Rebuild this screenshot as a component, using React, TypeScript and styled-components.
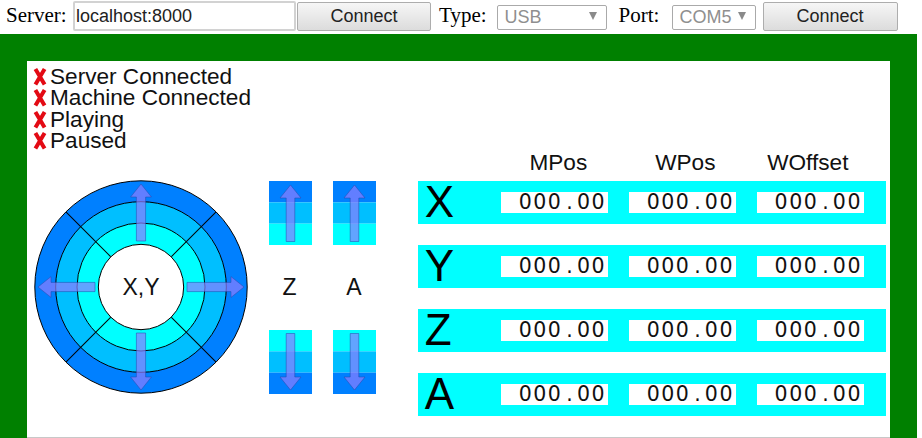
import styled, { createGlobalStyle } from "styled-components";

const GlobalStyle = createGlobalStyle`
  html, body {
    margin: 0;
    padding: 0;
    height: 438px;
    overflow: hidden;
    background: #fff;
  }
`;

const Toolbar = styled.div`
  display: flex;
  align-items: center;
  height: 34px;
  padding-left: 6px;
  box-sizing: border-box;
`;

const ToolLabel = styled.label<{ $left?: number; $right: number }>`
  font-family: "Liberation Serif", serif;
  font-size: 21px;
  color: #000;
  margin-left: ${(p) => p.$left ?? 0}px;
  margin-right: ${(p) => p.$right}px;
  margin-top: -3px;
`;

const ServerInput = styled.input`
  width: 223px;
  height: 30px;
  box-sizing: border-box;
  margin: -2px 1px 0 0;
  padding: 0 1px;
  border: 2px solid #d2d2d2;
  border-radius: 2px;
  font-family: "Liberation Sans", sans-serif;
  font-size: 18px;
  color: #222;
  outline: none;
`;

const ConnectButton = styled.button<{ $width: number; $left?: number }>`
  width: ${(p) => p.$width}px;
  height: 29px;
  box-sizing: border-box;
  margin: -2px 0 0 ${(p) => p.$left ?? 0}px;
  padding: 0;
  border: 1px solid #adadad;
  border-radius: 2px;
  background: linear-gradient(#f6f6f6, #dcdcdc);
  font-family: "Liberation Sans", sans-serif;
  font-size: 18px;
  color: #222;
`;

const SelectBox = styled.div<{ $width: number; $right: number }>`
  display: flex;
  align-items: center;
  justify-content: space-between;
  width: ${(p) => p.$width}px;
  height: 25px;
  box-sizing: border-box;
  margin: 0 ${(p) => p.$right}px 0 0;
  padding: 1px 9px 0 7px;
  border: 1px solid #aaa;
  border-radius: 2px;
  font-family: "Liberation Sans", sans-serif;
  font-size: 18px;
  color: #8f8f8f;
`;

const SelectArrow = styled.span`
  width: 0;
  height: 0;
  margin-top: -3px;
  border-left: 4px solid transparent;
  border-right: 4px solid transparent;
  border-top: 8px solid #8a8a8a;
`;

const Stage = styled.main`
  width: 917px;
  height: 404px;
  box-sizing: border-box;
  padding: 27px 27px 0;
  background: #008000;
`;

const Panel = styled.section`
  width: 863px;
  height: 377px;
  box-sizing: border-box;
  padding: 5px 4px 0 6px;
  background: #fff;
  border-bottom: 1px solid #c8c8c8;
  font-family: "Liberation Sans", sans-serif;
  color: #111;
`;

const StatusList = styled.ul`
  list-style: none;
  margin: 0;
  padding: 0;
`;

const StatusRow = styled.li`
  display: flex;
  align-items: center;
  height: 21.33px;
  font-size: 22.6px;
  line-height: 21.33px;
`;

const StatusMark = styled.svg`
  width: 14px;
  height: 19px;
  margin-right: 3px;
  flex-shrink: 0;
`;

const Controls = styled.div`
  display: flex;
  align-items: flex-start;
`;

const JogWheel = styled.svg`
  width: 214px;
  height: 214px;
  margin: 29px 21px 0 1px;
  flex-shrink: 0;
`;

const AxisColumn = styled.div`
  display: flex;
  flex-direction: column;
  align-items: center;
  width: 43px;
  margin: 29.67px 21.33px 0 0;
`;

const AxisName = styled.div`
  height: 85.33px;
  padding-right: 2px;
  display: flex;
  align-items: center;
  font-size: 23px;
`;

const AxisButton = styled.svg`
  display: block;
  width: 43px;
  height: 64px;
`;

const Readout = styled.div`
  width: 468px;
  margin-left: 20.67px;
`;

const Heading = styled.div`
  display: grid;
  grid-template-columns: 114px 140px 105px;
  height: 24px;
  margin: 0 0 5.67px 83px;
  font-size: 22.6px;
  line-height: 24px;
  text-align: center;
`;

const AxisBar = styled.div`
  display: flex;
  align-items: center;
  height: 42.67px;
  margin-bottom: 21.33px;
  padding-left: 6.5px;
  box-sizing: border-box;
  background: #00ffff;
`;

const AxisLetter = styled.div`
  width: 76.5px;
  font-size: 44px;
  line-height: 42.67px;
  color: #000;
`;

const Fields = styled.div`
  display: flex;
  gap: 21.33px;
`;

const Field = styled.div`
  width: 106.67px;
  height: 21.33px;
  box-sizing: border-box;
  padding-right: 2px;
  background: #fff;
  font-family: "DejaVu Sans", sans-serif;
  font-size: 20.5px;
  line-height: 21.33px;
  letter-spacing: 1.5px;
  text-align: right;
  color: #111;
`;

// the sans period is narrow: give it a full digit cell so the value reads as monospace
const FieldDot = styled.span`
  display: inline-block;
  width: 14.6px;
  letter-spacing: 0;
  text-align: center;
`;

const ARROW_FILL = "rgba(140, 125, 255, 0.7)";
const ARROW_EDGE = "rgba(40, 70, 170, 0.5)";

const statuses = ["Server Connected", "Machine Connected", "Playing", "Paused"];
const axes = ["X", "Y", "Z", "A"];
const columns = ["MPos", "WPos", "WOffset"];

function CrossMark() {
  return (
    <StatusMark viewBox="0 0 14 19">
      <path
        d="M2.4 2 L11.6 17.6 M11.6 2 L2.4 17.6"
        stroke="#e30a14"
        strokeWidth="4"
        fill="none"
      />
    </StatusMark>
  );
}

// arrow drawn pointing up, tip is measured from the wheel centre
function WheelArrow({ rotate }: { rotate: number }) {
  return (
    <path
      transform={`rotate(${rotate})`}
      d="M0 -103 L10.4 -90 L4.6 -90 L4.6 -46 L-4.6 -46 L-4.6 -90 L-10.4 -90 Z"
      fill={ARROW_FILL}
      stroke={ARROW_EDGE}
      strokeWidth="1"
      strokeLinejoin="round"
    />
  );
}

function Wheel() {
  const c = 107;
  const spokes = [45, 135, 225, 315];
  return (
    <JogWheel viewBox="0 0 214 214">
      <circle cx={c} cy={c} r="106.2" fill="#0080ff" stroke="#000" />
      <circle cx={c} cy={c} r="85.33" fill="#00bfff" stroke="#000" />
      <circle cx={c} cy={c} r="64" fill="#00ffff" stroke="#000" />
      {spokes.map((a) => (
        <line
          key={a}
          x1={c}
          y1={c - 42.67}
          x2={c}
          y2={c - 106.2}
          stroke="#000"
          transform={`rotate(${a} ${c} ${c})`}
        />
      ))}
      <circle cx={c} cy={c} r="42.67" fill="#fff" stroke="#000" />
      <g transform={`translate(${c} ${c})`}>
        {[0, 90, 180, 270].map((r) => (
          <WheelArrow key={r} rotate={r} />
        ))}
      </g>
      <text
        x={c}
        y={c + 8}
        textAnchor="middle"
        fontFamily="Liberation Sans, sans-serif"
        fontSize="23"
        fill="#111"
      >
        X,Y
      </text>
    </JogWheel>
  );
}

function StepButton({ down }: { down?: boolean }) {
  const bands = down
    ? ["#00ffff", "#00bfff", "#0080ff"]
    : ["#0080ff", "#00bfff", "#00ffff"];
  return (
    <AxisButton viewBox="0 0 43 64">
      {bands.map((color, i) => (
        <rect key={color} x="0" y={i * 21.33} width="43" height="21.34" fill={color} />
      ))}
      <path
        transform={down ? "rotate(180 21.5 32)" : undefined}
        d="M21.5 4 L32 17 L25.8 17 L25.8 60.5 L17.2 60.5 L17.2 17 L11 17 Z"
        fill={ARROW_FILL}
        stroke={ARROW_EDGE}
        strokeWidth="1"
        strokeLinejoin="round"
      />
    </AxisButton>
  );
}

function AxisControl({ name }: { name: string }) {
  return (
    <AxisColumn>
      <StepButton />
      <AxisName>{name}</AxisName>
      <StepButton down />
    </AxisColumn>
  );
}

export default function App() {
  return (
    <>
      <GlobalStyle />
      <Toolbar>
        <ToolLabel $right={6.4}>Server:</ToolLabel>
        <ServerInput defaultValue="localhost:8000" />
        <ConnectButton $width={134}>Connect</ConnectButton>
        <ToolLabel $left={8} $right={10}>
          Type:
        </ToolLabel>
        <SelectBox $width={110} $right={12}>
          USB
          <SelectArrow />
        </SelectBox>
        <ToolLabel $right={12.2}>Port:</ToolLabel>
        <SelectBox $width={84} $right={7}>
          COM5
          <SelectArrow />
        </SelectBox>
        <ConnectButton $width={135}>Connect</ConnectButton>
      </Toolbar>
      <Stage>
        <Panel>
          <StatusList>
            {statuses.map((s) => (
              <StatusRow key={s}>
                <CrossMark />
                {s}
              </StatusRow>
            ))}
          </StatusList>
          <Controls>
            <Wheel />
            <AxisControl name="Z" />
            <AxisControl name="A" />
            <Readout>
              <Heading>
                {columns.map((c) => (
                  <div key={c}>{c}</div>
                ))}
              </Heading>
              {axes.map((a) => (
                <AxisBar key={a}>
                  <AxisLetter>{a}</AxisLetter>
                  <Fields>
                    {columns.map((c) => (
                      <Field key={c}>
                        000<FieldDot>.</FieldDot>00
                      </Field>
                    ))}
                  </Fields>
                </AxisBar>
              ))}
            </Readout>
          </Controls>
        </Panel>
      </Stage>
    </>
  );
}
